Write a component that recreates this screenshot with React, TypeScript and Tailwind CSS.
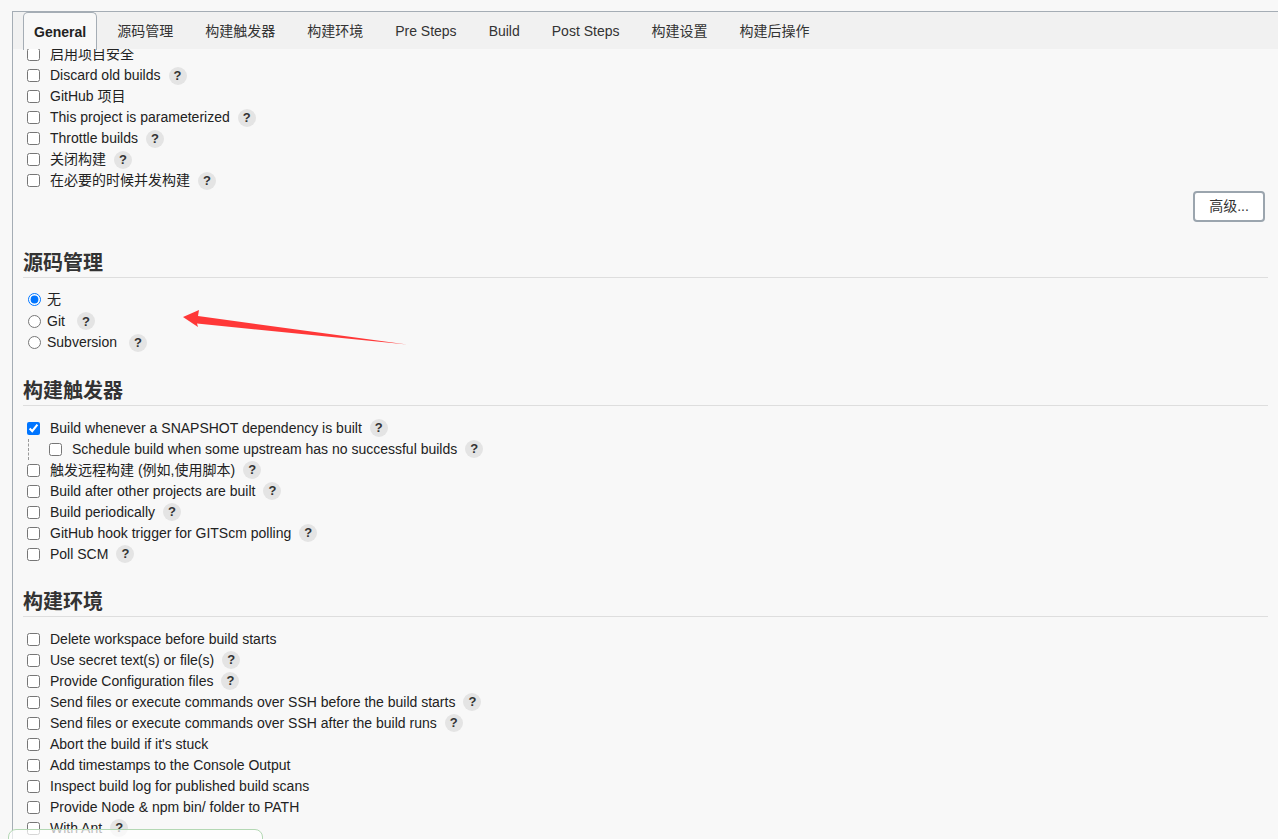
import React from 'react';

type Item = { label: string; help?: boolean; checked?: boolean };

const generalItems: Item[] = [
  { label: '启用项目安全' },
  { label: 'Discard old builds', help: true },
  { label: 'GitHub 项目' },
  { label: 'This project is parameterized', help: true },
  { label: 'Throttle builds', help: true },
  { label: '关闭构建', help: true },
  { label: '在必要的时候并发构建', help: true },
];

const scmItems: Item[] = [
  { label: '无', checked: true },
  { label: 'Git', help: true },
  { label: 'Subversion', help: true },
];

const triggerItems: Item[] = [
  { label: '触发远程构建 (例如,使用脚本)', help: true },
  { label: 'Build after other projects are built', help: true },
  { label: 'Build periodically', help: true },
  { label: 'GitHub hook trigger for GITScm polling', help: true },
  { label: 'Poll SCM', help: true },
];

const envItems: Item[] = [
  { label: 'Delete workspace before build starts' },
  { label: 'Use secret text(s) or file(s)', help: true },
  { label: 'Provide Configuration files', help: true },
  { label: 'Send files or execute commands over SSH before the build starts', help: true },
  { label: 'Send files or execute commands over SSH after the build runs', help: true },
  { label: "Abort the build if it's stuck" },
  { label: 'Add timestamps to the Console Output' },
  { label: 'Inspect build log for published build scans' },
  { label: 'Provide Node & npm bin/ folder to PATH' },
  { label: 'With Ant', help: true },
];

const tabs = ['源码管理', '构建触发器', '构建环境', 'Pre Steps', 'Build', 'Post Steps', '构建设置', '构建后操作'];

function Help({ wide }: { wide?: boolean }) {
  return (
    <span
      className={`${wide ? 'ml-3' : 'ml-2'} inline-flex h-[18px] w-[18px] items-center justify-center rounded-full bg-[#e4e4e4] text-[13px] font-bold text-[#333]`}
    >
      ?
    </span>
  );
}

function CheckRow({ item }: { item: Item }) {
  return (
    <div className="flex h-[21px] items-center">
      <input type="checkbox" defaultChecked={item.checked} className="m-0 ml-[4px] h-[13px] w-[13px]" />
      <span className="ml-[10px]">{item.label}</span>
      {item.help && <Help />}
    </div>
  );
}

function RadioRow({ item }: { item: Item }) {
  return (
    <div className="flex h-[21.5px] items-center">
      <input type="radio" name="scm" defaultChecked={item.checked} className="m-0 ml-[5px] h-[13px] w-[13px]" />
      <span className="ml-[6px]">{item.label}</span>
      {item.help && <Help wide />}
    </div>
  );
}

function SectionTitle({ children, className }: { children: React.ReactNode; className?: string }) {
  return (
    <h2 className={`h-[29px] border-b border-[#dedede] text-[20px] font-bold leading-[28px] text-[#333] ${className ?? ''}`}>
      {children}
    </h2>
  );
}

export default function App() {
  return (
    <div className="relative h-[839px] overflow-hidden bg-[#f8f8f8] font-['Liberation_Sans','Noto_Sans_CJK_SC',sans-serif] text-[14px] text-[#222]">
      <div className="ml-[12px] mt-[11px] border-l border-t border-[#a5adb5]">
        {/* tab bar */}
        <div className="flex h-[37px] bg-[#f1f1f1] pl-[10px]">
          <div className="-mb-px flex items-center rounded-t-[5px] border-x border-t border-[#a5adb5] bg-[#f8f8f8] px-[10px] pt-[2px] font-bold text-[#222]">
            General
          </div>
          <div className="flex">
            {tabs.map((t) => (
              <div key={t} className="flex items-center px-[16px] pt-[2px] text-[#333] first:pl-[20px]">
                {t}
              </div>
            ))}
          </div>
        </div>

        {/* content */}
        <div className="h-[790px] overflow-hidden px-[10px]">
          <div className="-mt-[5px]">
            {generalItems.map((it) => (
              <CheckRow key={it.label} item={it} />
            ))}
            <div className="flex justify-end pr-[3px]">
              <button className="h-[31px] w-[72px] rounded-[4px] border-2 border-[#9ba5ae] bg-white text-[14px] text-[#333]">
                高级...
              </button>
            </div>

            <SectionTitle className="mt-[27px]">源码管理</SectionTitle>
            <div className="mt-[11px]">
              {scmItems.map((it) => (
                <RadioRow key={it.label} item={it} />
              ))}
            </div>

            <SectionTitle className="mt-[23px]">构建触发器</SectionTitle>
            <div className="mt-[12px]">
              <CheckRow item={{ label: 'Build whenever a SNAPSHOT dependency is built', help: true, checked: true }} />
              <div className="ml-[5px] flex h-[21px] items-center border-l border-dashed border-[#999] pl-[20px]">
                <input type="checkbox" className="m-0 h-[13px] w-[13px]" />
                <span className="ml-[10px]">Schedule build when some upstream has no successful builds</span>
                <Help />
              </div>
              {triggerItems.map((it) => (
                <CheckRow key={it.label} item={it} />
              ))}
            </div>

            <SectionTitle className="mt-[23px]">构建环境</SectionTitle>
            <div className="mt-[12px]">
              {envItems.map((it) => (
                <CheckRow key={it.label} item={it} />
              ))}
            </div>
          </div>
        </div>
      </div>

      {/* annotation arrow */}
      <svg className="pointer-events-none absolute left-0 top-0" width="1278" height="839">
        <polygon points="183,317 199,310 198,316 407,344.5 197,323.5 198,327" fill="#ff3838" />
      </svg>

      {/* bottom notification box */}
      <div className="absolute left-[8px] top-[829px] h-[20px] w-[255px] rounded-t-[8px] border border-[#b4d8b4] bg-white/70" />
    </div>
  );
}
